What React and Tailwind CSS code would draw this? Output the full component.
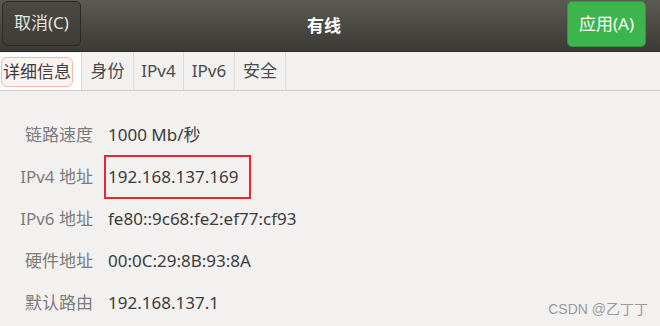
import React from "react";

const font = { fontFamily: '"Noto Sans", "Noto Sans CJK SC", sans-serif' };

export default function App() {
  const rows = [
    ["链路速度", "1000 Mb/秒", false],
    ["IPv4 地址", "192.168.137.169", true],
    ["IPv6 地址", "fe80::9c68:fe2:ef77:cf93", false],
    ["硬件地址", "00:0C:29:8B:93:8A", false],
    ["默认路由", "192.168.137.1", false],
  ];
  const tabs = ["身份", "IPv4", "IPv6", "安全"];
  return (
    <div className="relative w-[660px] h-[326px] bg-[#f2f1f0] overflow-hidden" style={font}>
      {/* header */}
      <div className="h-[52px] flex items-center justify-between px-[2px] bg-gradient-to-b from-[#5c5a54] to-[#3b3a36] border-b border-[#2a2925]">
        <div className="w-[79px] h-[45px] mb-[5px] rounded-[5px] border border-[#2c2b28] bg-gradient-to-b from-[#4a4843] to-[#3d3c37] flex items-center justify-center text-[#e6e4df] text-[17px]">
          取消(C)
        </div>
        <div className="text-white text-[17px] font-bold">有线</div>
        <div className="w-[79px] h-[46px] mb-[4px] mr-[12px] rounded-[5px] bg-[#3cb64c] border border-[#2f9a3c] flex items-center justify-center text-white text-[17px]">
          应用(A)
        </div>
      </div>
      {/* tabs */}
      <div className="h-[39px] flex border-b border-[#cfcdc9] bg-[#f2f1f0]">
        <div className="w-[82px] mt-[1px] bg-white border-r border-[#dcdad6] flex items-center pl-[1px]">
          <div className="h-[30px] px-[1px] rounded-[6px] border border-[#f3b9a6] bg-[#fdf3f0] flex items-center text-[17px] text-[#3c3c3c]">
            详细信息
          </div>
        </div>
        {tabs.map((t, i) => (
          <div
            key={t}
            className={
              "flex items-center justify-center border-r border-[#dcdad6] text-[17px] text-[#4a4a4a] " +
              (i === 0 ? "w-[52px]" : i === 1 ? "w-[50px]" : i === 2 ? "w-[51px]" : "w-[51px]")
            }
          >
            {t}
          </div>
        ))}
      </div>
      {/* details */}
      <div className="pt-[23px] flex flex-col">
        {rows.map(([label, value, boxed]) => (
          <div key={label} className="h-[42px] flex items-center">
            <div className="w-[93px] text-right text-[17px] text-[#7c7c7a] whitespace-nowrap">{label}</div>
            <div className="ml-[11px]">
              {boxed ? (
                <div className="w-[147px] h-[44px] border-2 border-[#e8262e] flex items-center pl-[2px] text-[17px] text-[#3c3c3c] whitespace-nowrap">
                  {value}
                </div>
              ) : (
                <div className="pl-[4px] text-[17px] text-[#3c3c3c] whitespace-nowrap">{value}</div>
              )}
            </div>
          </div>
        ))}
      </div>
      <div className="absolute right-[12px] bottom-[6px] text-[14px] text-[#9a9a9a]" style={{ fontFamily: '"Liberation Sans", "Noto Sans CJK SC", sans-serif' }}>
        CSDN @乙丁丁
      </div>
    </div>
  );
}
